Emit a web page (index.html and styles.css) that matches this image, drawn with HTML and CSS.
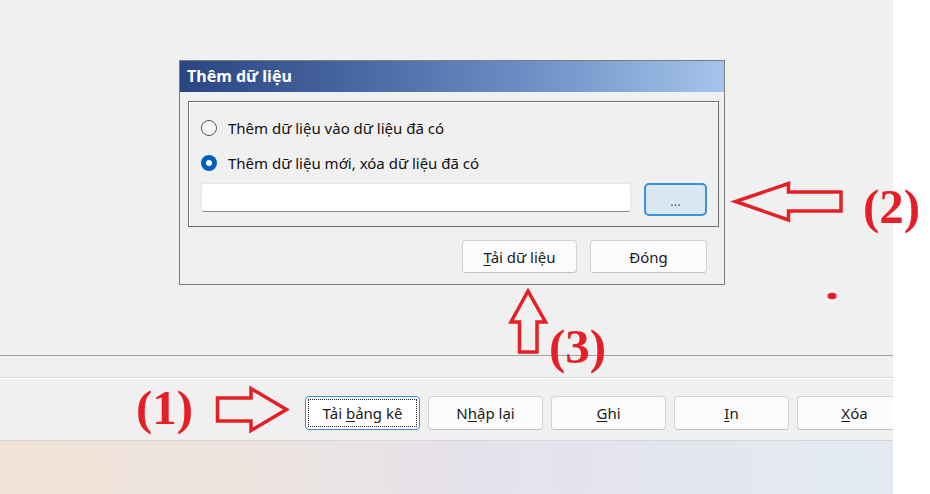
FILE: index.html
```html
<!DOCTYPE html>
<html lang="vi">
<head>
<meta charset="utf-8">
<title>Thêm dữ liệu</title>
<link rel="stylesheet" href="styles.css">
</head>
<body>
<div class="screen">
  <div class="app">
    <div class="workspace">
      <div class="dialog">
        <div class="dialog-title">Thêm dữ liệu</div>
        <div class="group">
          <div class="radio-row"><span class="radio"></span><span class="radio-label">Thêm dữ liệu vào dữ liệu đã có</span></div>
          <div class="radio-row"><span class="radio checked"></span><span class="radio-label">Thêm dữ liệu mới, xóa dữ liệu đã có</span></div>
          <div class="file-row">
            <div class="file-input"></div>
            <div class="browse">...</div>
          </div>
        </div>
        <div class="dialog-footer">
          <div class="btn btn-load"><span><u>T</u>ải dữ liệu</span></div>
          <div class="btn btn-close"><span>Đón<u>g</u></span></div>
        </div>
      </div>
    </div>
    <div class="status"></div>
    <div class="toolbar">
      <div class="btn tbtn focused"><span class="focus-ring"><span>Tải <u>b</u>ảng kê</span></span></div>
      <div class="btn tbtn"><span>N<u>h</u>ập lại</span></div>
      <div class="btn tbtn"><span><u>G</u>hi</span></div>
      <div class="btn tbtn"><span><u>I</u>n</span></div>
      <div class="btn tbtn"><span><u>X</u>óa</span></div>
    </div>
    <div class="taskbar"></div>
  </div>
  <svg class="annotations" width="930" height="494" viewBox="0 0 930 494">
    <polygon class="arrow" points="217.5,398 251,398 251,388.5 286.5,409.5 251,430.5 251,421 217.5,421"/>
    <polygon class="arrow" points="841,192 788.5,192 788.5,183.5 735.5,201.5 788.5,220 788.5,211 841,211"/>
    <polygon class="arrow" points="528,291 545.5,322 537,322 537,352 519.5,352 519.5,322 511,322"/>
    <ellipse class="dot" cx="832" cy="296" rx="4.5" ry="3.2"/>
    <text class="mark" x="136" y="424">(1)</text>
    <text class="mark" x="863" y="223">(2)</text>
    <text class="mark" x="549" y="363">(3)</text>
  </svg>
</div>
</body>
</html>
```

FILE: styles.css
```css
html, body {
  margin: 0;
  padding: 0;
  background: #ffffff;
}

.screen {
  position: relative;
  width: 930px;
  height: 494px;
  overflow: hidden;
  font-family: "Noto Sans", "Open Sans", sans-serif;
  font-size: 15px;
  color: #111;
}

.app {
  width: 893px;
  height: 494px;
  display: flex;
  flex-direction: column;
  overflow: hidden;
  background: #f0f0f0;
}

.workspace {
  height: 355px;
  box-sizing: border-box;
  padding: 60px 0 0 179px;
  flex: none;
}

.dialog {
  width: 546px;
  box-sizing: border-box;
  border: 1px solid #7d7d7d;
  background: #f0f0f0;
  display: flex;
  flex-direction: column;
}

.dialog-title {
  height: 31px;
  line-height: 30px;
  padding-left: 7px;
  color: #ffffff;
  font-weight: 700;
  font-size: 16px;
  background: linear-gradient(to right, #2a4682 0%, #46649f 30%, #6f90c6 65%, #a4c4eb 100%);
}

.group {
  margin: 9px 5px 0 8px;
  border: 1px solid #6e6e6e;
  box-shadow: inset 1px 1px 0 #ffffff;
  padding: 8px 11px 10px 12px;
  display: flex;
  flex-direction: column;
}

.radio-row {
  height: 35px;
  display: flex;
  align-items: center;
  gap: 11px;
}

.radio {
  width: 16px;
  height: 16px;
  box-sizing: border-box;
  border-radius: 50%;
  border: 1px solid #575757;
  background: #f7f7f7;
  flex: none;
  position: relative;
}

.radio.checked {
  border: none;
  background: #005fb8;
}

.radio.checked::after {
  content: "";
  position: absolute;
  left: 5px;
  top: 5px;
  width: 6px;
  height: 6px;
  border-radius: 50%;
  background: #ffffff;
}

.radio-label {
  color: #111;
}

.file-row {
  margin-top: 3px;
  display: flex;
  gap: 13px;
  align-items: flex-start;
}

.file-input {
  flex: 1;
  height: 29px;
  box-sizing: border-box;
  background: #ffffff;
  border: 1px solid #e6e6e6;
  border-bottom: 1px solid #8a8a8a;
  border-radius: 3px;
}

.browse {
  width: 63px;
  height: 33px;
  box-sizing: border-box;
  border: 2px solid #3d8fe0;
  border-radius: 5px;
  background: #dbe6f3;
  color: #555;
  font-size: 13px;
  display: flex;
  align-items: center;
  justify-content: center;
  padding-top: 2px;
}

.dialog-footer {
  display: flex;
  justify-content: flex-end;
  gap: 13px;
  margin-top: 13px;
  padding: 0 17px 11px 0;
}

.btn {
  height: 33px;
  box-sizing: border-box;
  border: 1px solid #d3d3d3;
  border-bottom-color: #c2c2c2;
  border-radius: 4px;
  background: #fbfbfb;
  display: flex;
  align-items: center;
  justify-content: center;
  color: #1a1a1a;
  white-space: pre;
}

.btn u {
  text-underline-offset: 2px;
}

.btn-load {
  width: 115px;
}

.btn-close {
  width: 117px;
}

.status {
  flex: none;
  height: 21px;
  border-top: 1px solid #a3a3a3;
  border-bottom: 1px solid #dadada;
  background: #f0f0f0;
}

.toolbar {
  flex: none;
  height: 44px;
  border-top: 1px solid #ffffff;
  border-bottom: 1px solid #d5d5d5;
  padding: 17px 0 0 305px;
  display: flex;
  gap: 8px;
  align-items: flex-start;
}

.tbtn {
  width: 115px;
  height: 34px;
  flex: none;
}

.tbtn.focused {
  border: 1px solid #3f8be0;
  background: #ffffff;
  padding: 2px;
}

.focus-ring {
  flex: 1;
  align-self: stretch;
  border: 1px dotted #222;
  display: flex;
  align-items: center;
  justify-content: center;
}

.taskbar {
  flex: 1;
  background: linear-gradient(to right, #f1e3d6 0%, #ede4e0 28%, #e6e2eb 52%, #e4e4ee 68%, #e2e8ed 82%, #e3e9f2 100%);
}

.annotations {
  position: absolute;
  left: 0;
  top: 0;
  pointer-events: none;
}

.arrow {
  fill: none;
  stroke: #e61e25;
  stroke-width: 3.5;
  stroke-linejoin: miter;
}

.dot {
  fill: #e61e25;
}

.mark {
  font-family: "Liberation Serif", "Times New Roman", serif;
  font-weight: 700;
  font-size: 49px;
  fill: #e61e25;
}
```
